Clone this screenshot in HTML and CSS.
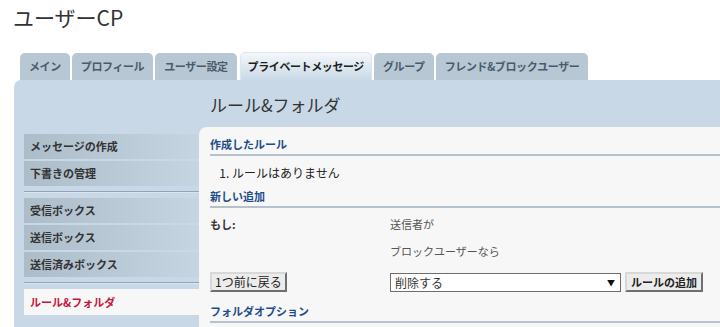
FILE: index.html
```html
<!DOCTYPE html>
<html lang="ja">
<head>
  <meta charset="UTF-8" />
  <title>ユーザーCP</title>
  <link rel="stylesheet" href="styles.css">
</head>
<body>
  <h1 class="page-title">ユーザーCP</h1>

  <!-- タブ -->
  <div class="tabs">
    <div class="tab">メイン</div>
    <div class="tab">プロフィール</div>
    <div class="tab">ユーザー設定</div>
    <div class="tab active">プライベートメッセージ</div>
    <div class="tab">グループ</div>
    <div class="tab">フレンド&amp;ブロックユーザー</div>
  </div>

  <div class="panel">
    <div class="panel-head">
      <h2>ルール&amp;フォルダ</h2>
    </div>

    <div class="panel-body">
      <!-- サイドメニュー -->
      <div class="sidebar">
        <div class="menu-group">
          <div class="menu-item">メッセージの作成</div>
          <div class="menu-item">下書きの管理</div>
        </div>
        <div class="menu-sep"></div>
        <div class="menu-group">
          <div class="menu-item">受信ボックス</div>
          <div class="menu-item">送信ボックス</div>
          <div class="menu-item">送信済みボックス</div>
        </div>
        <div class="menu-sep"></div>
        <div class="menu-group">
          <div class="menu-item current">ルール&amp;フォルダ</div>
        </div>
      </div>

      <!-- メイン -->
      <div class="content">
        <h3 class="section-title">作成したルール</h3>
        <ol class="rule-list">
          <li>ルールはありません</li>
        </ol>

        <h3 class="section-title">新しい追加</h3>
        <div class="rule-form">
          <div class="rule-row">
            <div class="rule-label">もし:</div>
            <div class="rule-value">送信者が</div>
          </div>
          <div class="rule-row second">
            <div class="rule-label"></div>
            <div class="rule-value">ブロックユーザーなら</div>
          </div>
          <div class="rule-row actions">
            <div class="rule-label"><button class="btn btn-back">1つ前に戻る</button></div>
            <div class="rule-value">
              <div class="select-wrap">
                <select class="select-box">
                  <option>削除する</option>
                </select>
              </div>
              <button class="btn btn-bold">ルールの追加</button>
            </div>
          </div>
        </div>

        <h3 class="section-title">フォルダオプション</h3>
      </div>
    </div>
  </div>
</body>
</html>
```

FILE: styles.css
```css
body {
  margin: 0;
  font-family: "Noto Sans CJK JP", "Noto Sans", sans-serif;
  background-color: #ffffff;
  color: #333;
  overflow: hidden;
  height: 327px;
}

.page-title {
  margin: 0;
  padding: 3px 0 0 13px;
  font-size: 21px;
  font-weight: normal;
  line-height: 28px;
  color: #333;
}

/* タブ */
.tabs {
  display: flex;
  align-items: flex-end;
  gap: 2px;
  margin-top: 21px;
  padding-left: 20px;
  height: 28px;
}

.tab {
  height: 27px;
  line-height: 27px;
  padding: 0 9px;
  font-size: 11px;
  font-weight: bold;
  letter-spacing: -0.4px;
  color: #4b5b6c;
  background-color: #b7c7d4;
  border-radius: 5px 5px 0 0;
  box-sizing: border-box;
}

.tab.active {
  height: 28px;
  line-height: 27px;
  color: #1e1e1e;
  background: linear-gradient(#f4f7fa, #c9d9e7);
  border: 1px solid #dce6ef;
  border-bottom: none;
  padding: 0 7px;
  margin-left: 1px;
}

/* パネル */
.panel {
  margin-left: 14px;
  background-color: #c8d8e6;
  border-radius: 7px 0 0 0;
  height: 247px;
}

.panel-head {
  height: 47px;
  box-sizing: border-box;
  padding: 14px 0 0 196px;
}

.panel-head h2 {
  margin: 0;
  font-size: 17px;
  line-height: 22px;
  font-weight: normal;
  color: #333;
}

.panel-body {
  display: flex;
  height: 200px;
}

.sidebar {
  width: 185px;
  padding: 7px 0 0 10px;
  box-sizing: border-box;
}

.menu-group {
  display: flex;
  flex-direction: column;
  gap: 2px;
}

.menu-item {
  height: 25px;
  line-height: 25px;
  padding-left: 6px;
  font-size: 11px;
  font-weight: bold;
  color: #333;
  background: linear-gradient(90deg, #adbcc9, #c6d5e2);
}

.menu-item.current {
  height: 26px;
  line-height: 26px;
  background: #f7f7f7;
  color: #c4163a;
}

.menu-sep {
  height: 0;
  margin: 5px 0 5px;
  border-top: 1px solid #90a4b6;
  border-bottom: 1px solid #dbe5ee;
}

.content {
  flex: 1;
  background-color: #f7f7f7;
  border-radius: 8px 0 0 0;
  padding: 9px 0 0 11px;
}

.section-title {
  margin: 0;
  font-size: 11px;
  line-height: 16px;
  font-weight: bold;
  color: #1d4c8a;
  padding-bottom: 2px;
  border-bottom: 2px solid #b6c1cc;
}

.rule-list {
  margin: 8px 0 6px;
  padding-left: 22px;
  font-size: 12px;
  line-height: 18px;
  color: #222;
}

.rule-row {
  display: flex;
  align-items: center;
  font-size: 11px;
  line-height: 18px;
}

.rule-row:first-child {
  margin-top: 7px;
}

.rule-row.second {
  margin-top: 9px;
}

.rule-row.actions {
  margin-top: 12px;
  margin-bottom: 11px;
}

.rule-label {
  width: 180px;
  font-weight: bold;
  color: #333;
}

.rule-value {
  display: flex;
  align-items: center;
  gap: 4px;
  color: #555;
}

.btn {
  height: 20px;
  padding: 0 4px;
  font-family: "Noto Sans CJK JP", sans-serif;
  font-size: 11px;
  line-height: 16px;
  color: #222;
  background-color: #ececec;
  border: 2px solid;
  border-color: #d8d8d8 #6f6f6f #6f6f6f #d8d8d8;
}

.btn-back {
  font-size: 12px;
  padding: 0 3px;
}

.btn-bold {
  font-weight: bold;
}

.select-wrap {
  position: relative;
}

.select-wrap::after {
  content: "▼";
  position: absolute;
  right: 6px;
  top: 3px;
  font-size: 8px;
  line-height: 13px;
  color: #111;
  pointer-events: none;
}

.select-box {
  appearance: none;
  width: 231px;
  height: 19px;
  padding: 0 4px;
  font-family: "Noto Sans CJK JP", sans-serif;
  font-size: 12px;
  color: #333;
  background-color: #fff;
  border: 1px solid #6e6e6e;
  border-radius: 0;
}
```
